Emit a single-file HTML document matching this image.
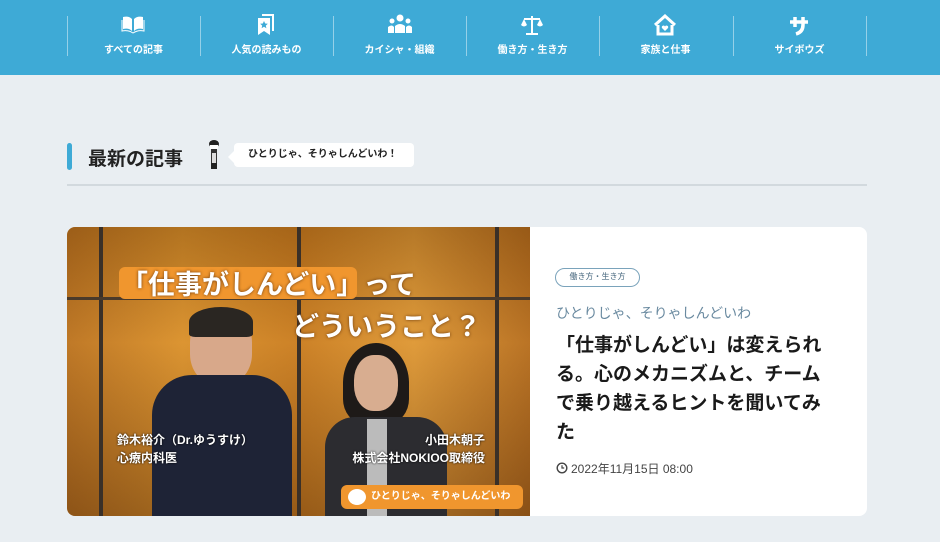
<!DOCTYPE html>
<html><head><meta charset="utf-8"><style>
*{margin:0;padding:0;box-sizing:border-box}
body{width:940px;height:542px;background:#e9eef2;font-family:"Liberation Sans","Noto Sans CJK JP",sans-serif;position:relative;overflow:hidden}
.nav{position:absolute;left:0;top:0;width:940px;height:75px;background:#3eaad6}
.sep{position:absolute;top:16px;width:1px;height:40px;background:rgba(255,255,255,.45)}
.item{position:absolute;top:0;width:133px;height:75px;color:#fff;text-align:center}
.item svg{position:absolute;left:54px;top:14px}
.item span{position:absolute;left:0;right:0;top:41px;font-size:10px;font-weight:bold}
.abs{position:absolute}
</style></head><body>
<div class="nav">
<div class="sep" style="left:67px"></div><div class="sep" style="left:200px"></div><div class="sep" style="left:333px"></div><div class="sep" style="left:466px"></div><div class="sep" style="left:599px"></div><div class="sep" style="left:733px"></div><div class="sep" style="left:866px"></div>
<div class="item" style="left:67px"><svg width="24" height="20" viewBox="0 0 24 20"><path d="M2 3c4-1 7 0 9 2v12c-2-2-5-3-9-2z M22 3c-4-1-7 0-9 2v12c2-2 5-3 9-2z" fill="#fff"/><path d="M1 6v11c4-1 8 0 11 2 3-2 7-3 11-2V6" stroke="#fff" fill="none" stroke-width="1"/></svg><span>すべての記事</span></div>
<div class="item" style="left:200px"><svg width="24" height="22" viewBox="0 0 24 22"><path d="M8 1h11v16" stroke="#fff" stroke-width="2" fill="none"/><path d="M4 4h12v17l-6-4-6 4z" fill="#fff"/><path d="M10 7l1.2 2.5 2.6.3-2 1.8.6 2.6-2.4-1.4-2.4 1.4.6-2.6-2-1.8 2.6-.3z" fill="#3eaad6"/></svg><span>人気の読みもの</span></div>
<div class="item" style="left:333px"><svg width="26" height="20" viewBox="0 0 26 20"><circle cx="13" cy="4" r="3.5" fill="#fff"/><circle cx="5" cy="7" r="2.5" fill="#fff"/><circle cx="21" cy="7" r="2.5" fill="#fff"/><path d="M8 19v-7q5-4 10 0v7z M1 19v-6q4-3 6 0v6z M19 19v-6q3-3 6 0v6z" fill="#fff"/></svg><span>カイシャ・組織</span></div>
<div class="item" style="left:466px"><svg width="24" height="22" viewBox="0 0 24 22"><path d="M12 2v17M6 20h12M4 5h16" stroke="#fff" stroke-width="2" fill="none"/><path d="M1 11l3-6 3 6q-3 3-6 0zM17 11l3-6 3 6q-3 3-6 0z" fill="#fff"/></svg><span>働き方・生き方</span></div>
<div class="item" style="left:599px"><svg width="24" height="22" viewBox="0 0 24 22"><path d="M2 11L12 2l10 9" stroke="#fff" stroke-width="3" fill="none"/><path d="M5 11v9h14v-9" stroke="#fff" stroke-width="3" fill="none"/><path d="M12 17l-3-3a1.5 1.5 0 0 1 3-1.5 1.5 1.5 0 0 1 3 1.5z" fill="#fff"/></svg><span>家族と仕事</span></div>
<div class="item" style="left:733px"><svg width="24" height="22" viewBox="0 0 24 22"><path d="M3 8h18M8 3v10M16 3v8q0 7-7 9" stroke="#fff" stroke-width="3.5" fill="none"/></svg><span>サイボウズ</span></div>
</div>

<div class="abs" style="left:67px;top:143px;width:5px;height:27px;background:#3eaad6;border-radius:3px"></div>
<div class="abs" style="left:88px;top:144px;font-size:19px;font-weight:bold;color:#222">最新の記事</div>
<svg class="abs" style="left:206px;top:139px" width="16" height="34" viewBox="0 0 16 34"><ellipse cx="8" cy="5" rx="5" ry="4" fill="#222"/><rect x="4" y="6" width="8" height="4" fill="#fff"/><rect x="5" y="10" width="6" height="14" fill="#333"/><rect x="6" y="14" width="4" height="10" fill="#ddd"/><rect x="5" y="24" width="6" height="6" fill="#222"/></svg>
<div class="abs" style="left:234px;top:143px;width:180px;height:24px;background:#fff;border-radius:4px;font-size:10px;font-weight:bold;color:#222;line-height:24px;padding-left:14px">ひとりじゃ、そりゃしんどいわ！</div>
<div class="abs" style="left:228px;top:151px;border:6px solid transparent;border-right-color:#fff;border-left:0"></div>
<div class="abs" style="left:67px;top:184px;width:800px;height:2px;background:#d2d9de"></div>

<div class="abs" style="left:67px;top:227px;width:800px;height:289px;background:#fff;border-radius:8px;overflow:hidden">
 <div class="abs" style="left:0;top:0;width:463px;height:289px;background:linear-gradient(90deg,#b8701e 0%,#d88f2a 25%,#c77a1e 50%,#dc9634 75%,#b26a1c 100%)">
  <div class="abs" style="left:0;top:0;width:463px;height:289px;background:linear-gradient(180deg,rgba(90,50,10,.3),rgba(255,200,120,.1) 40%,rgba(60,30,10,.35))"></div>
  <div class="abs" style="left:32px;top:0;width:4px;height:289px;background:#3a3028"></div>
  <div class="abs" style="left:230px;top:0;width:4px;height:289px;background:#3a3028"></div>
  <div class="abs" style="left:428px;top:0;width:4px;height:289px;background:#3a3028"></div>
  <div class="abs" style="left:0;top:70px;width:463px;height:3px;background:#4a3a2a"></div>
  <div class="abs" style="left:123px;top:82px;width:62px;height:75px;background:#d8a88a;border-radius:45% 45% 40% 40%"></div>
  <div class="abs" style="left:122px;top:80px;width:64px;height:30px;background:#2a2622;border-radius:50% 50% 10% 10%"></div>
  <div class="abs" style="left:85px;top:148px;width:140px;height:141px;background:#1e2336;border-radius:40px 40px 0 0"></div>
  <div class="abs" style="left:276px;top:116px;width:66px;height:80px;background:#1e1a18;border-radius:50% 50% 30% 30%"></div>
  <div class="abs" style="left:287px;top:128px;width:44px;height:56px;background:#d8ad90;border-radius:45%"></div>
  <div class="abs" style="left:258px;top:190px;width:122px;height:99px;background:#2c2c30;border-radius:30px 30px 0 0"></div>
  <div class="abs" style="left:300px;top:192px;width:20px;height:97px;background:#bbb"></div>
  <div class="abs" style="left:52px;top:40px;width:238px;height:32px;background:#f0962e;border-radius:6px"></div>
  <div class="abs" style="left:54px;top:36px;font-size:27px;font-weight:bold;color:#fff;text-shadow:0 0 3px #6a3a10">「仕事がしんどい」って</div>
  <div class="abs" style="left:225px;top:78px;font-size:27px;font-weight:bold;color:#fff;text-shadow:0 0 3px #6a3a10">どういうこと？</div>
  <div class="abs" style="left:50px;top:204px;font-size:12px;font-weight:bold;color:#fff;line-height:18px;text-shadow:0 0 2px #000">鈴木裕介（Dr.ゆうすけ）<br>心療内科医</div>
  <div class="abs" style="left:248px;top:204px;width:170px;text-align:right;font-size:12px;font-weight:bold;color:#fff;line-height:18px;text-shadow:0 0 2px #000">小田木朝子<br>株式会社NOKIOO取締役</div>
  <div class="abs" style="left:274px;top:258px;width:182px;height:24px;background:#f0962e;border-radius:6px;color:#fff;font-size:10px;font-weight:bold;line-height:24px;padding-left:30px;white-space:nowrap">ひとりじゃ、そりゃしんどいわ</div>
  <div class="abs" style="left:281px;top:262px;width:18px;height:16px;background:#fff;border-radius:50%"></div>
 </div>
 <div class="abs" style="left:488px;top:41px;width:85px;height:19px;border:1.5px solid #7aa3bb;border-radius:10px;font-size:8px;color:#4a6a80;text-align:center;line-height:16px">働き方・生き方</div>
 <div class="abs" style="left:489px;top:76px;font-size:14px;color:#6a8aa0">ひとりじゃ、そりゃしんどいわ</div>
 <div class="abs" style="left:489px;top:104px;width:274px;font-size:19px;font-weight:bold;color:#1a1a1a;line-height:29px">「仕事がしんどい」は変えられる。心のメカニズムと、チームで乗り越えるヒントを聞いてみた</div>
 <svg class="abs" style="left:489px;top:235px" width="12" height="12" viewBox="0 0 12 12"><circle cx="6" cy="6" r="4.8" stroke="#444" stroke-width="1.4" fill="none"/><path d="M6 3.3V6h2.2" stroke="#444" stroke-width="1.2" fill="none"/></svg>
 <div class="abs" style="left:504px;top:233px;font-size:12px;color:#444">2022年11月15日 08:00</div>
</div>
</body></html>
